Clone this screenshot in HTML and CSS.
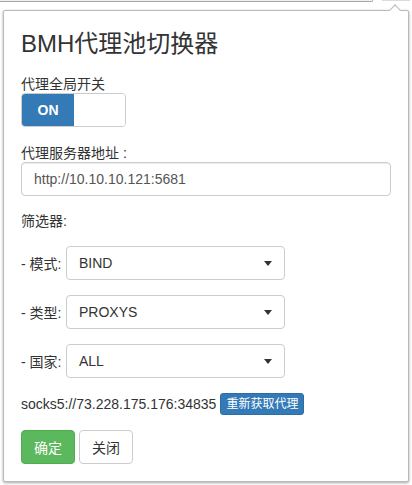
FILE: index.html
```html
<!DOCTYPE html>
<html lang="zh-CN">
<head>
<meta charset="utf-8">
<title>BMH代理池切换器</title>
<link rel="stylesheet" href="styles.css">
</head>
<body>
<div class="chrome">
  <div class="omnibox"></div>
  <div class="action"></div>
</div>
<div class="popup">
  <span class="arrow"></span>
  <h3 class="title">BMH代理池切换器</h3>
  <div class="label label-switch">代理全局开关</div>
  <div class="switch">
    <span class="switch-on">ON</span>
    <span class="switch-off"></span>
  </div>
  <div class="label label-server">代理服务器地址 :</div>
  <div class="input">http://10.10.10.121:5681</div>
  <div class="label label-filter">筛选器:</div>
  <div class="filter-row">
    <span class="filter-label">- 模式:</span>
    <div class="select"><span>BIND</span><span class="caret"></span></div>
  </div>
  <div class="filter-row">
    <span class="filter-label">- 类型:</span>
    <div class="select"><span>PROXYS</span><span class="caret"></span></div>
  </div>
  <div class="filter-row">
    <span class="filter-label">- 国家:</span>
    <div class="select"><span>ALL</span><span class="caret"></span></div>
  </div>
  <div class="proxy-row">
    <span class="proxy-text">socks5://73.228.175.176:34835</span>
    <span class="btn-xs">重新获取代理</span>
  </div>
  <div class="actions">
    <span class="btn btn-success">确定</span>
    <span class="btn btn-default">关闭</span>
  </div>
</div>
</body>
</html>
```
FILE: styles.css
```css
* { box-sizing: border-box; }
html, body {
  margin: 0;
  padding: 0;
  background: #fff;
}
body {
  font-family: "Liberation Sans", "Noto Sans CJK SC", sans-serif;
  font-size: 14px;
  color: #333;
  width: 412px;
  height: 485px;
  overflow: hidden;
}
.chrome {
  display: flex;
  height: 10px;
}
.omnibox {
  width: 373px;
  height: 2px;
  background: #f1f1f1;
  border-bottom: 1px solid #a6a6a6;
  border-right: 1px solid #a6a6a6;
  border-bottom-right-radius: 3px;
}
.action {
  margin-left: 9px;
  width: 28px;
  height: 1px;
  background: #dcdcdc;
}
.popup {
  position: relative;
  margin: 0 3px;
  height: 472px;
  border: 1px solid #b9b9b9;
  border-radius: 2px;
  box-shadow: 0 1px 3px rgba(0, 0, 0, 0.35);
  background: #fff;
  padding: 20px 17px 17px;
  display: flex;
  flex-direction: column;
  align-items: flex-start;
}
.arrow {
  position: absolute;
  left: 386.5px;
  top: -5.5px;
  width: 8px;
  height: 8px;
  background: #fff;
  border-top: 1px solid #b9b9b9;
  border-left: 1px solid #b9b9b9;
  transform: rotate(45deg);
}
.title {
  margin: 0;
  font-size: 24px;
  font-weight: 400;
  line-height: 26px;
  color: #333;
}
.label {
  line-height: 17px;
  color: #333;
}
.label-switch { margin-top: 19px; }
.label-server { margin-top: 18px; }
.label-filter { margin-top: 17px; }
.switch {
  display: flex;
  width: 105px;
  height: 34px;
  border: 1px solid #ccc;
  border-radius: 4px;
  overflow: hidden;
}
.switch-on {
  width: 52px;
  background: #337ab7;
  color: #fff;
  font-weight: 700;
  font-size: 14px;
  display: flex;
  align-items: center;
  justify-content: center;
}
.switch-off {
  flex: 1;
  background: #fff;
}
.input {
  width: 370px;
  height: 34px;
  border: 1px solid #ccc;
  border-radius: 4px;
  padding: 0 12px;
  display: flex;
  align-items: center;
  color: #555;
  box-shadow: inset 0 1px 1px rgba(0, 0, 0, 0.075);
}
.filter-row {
  display: flex;
  align-items: center;
  margin-top: 15px;
}
.filter-row:first-of-type { margin-top: 16px; }
.label-filter + .filter-row { margin-top: 16px; }
.filter-label {
  width: 45px;
  color: #333;
}
.select {
  width: 219px;
  height: 34px;
  border: 1px solid #ccc;
  border-radius: 4px;
  padding: 0 12px;
  display: flex;
  align-items: center;
  justify-content: space-between;
  color: #333;
}
.caret {
  width: 0;
  height: 0;
  border-top: 5px solid #333;
  border-left: 4px solid transparent;
  border-right: 4px solid transparent;
}
.proxy-row {
  display: flex;
  align-items: center;
  margin-top: 15px;
  height: 22px;
}
.proxy-text {
  margin-right: 4px;
}
.btn-xs {
  height: 22px;
  padding: 0 5px;
  font-size: 12px;
  line-height: 20px;
  color: #fff;
  background: #337ab7;
  border: 1px solid #2e6da4;
  border-radius: 3px;
  display: inline-flex;
  align-items: center;
}
.actions {
  display: flex;
  gap: 4px;
  margin-top: 15px;
}
.btn {
  height: 34px;
  padding: 0 12px;
  border: 1px solid #ccc;
  border-radius: 4px;
  display: inline-flex;
  align-items: center;
  font-size: 14px;
}
.btn-success {
  background: #5cb85c;
  border-color: #4cae4c;
  color: #fff;
}
.btn-default {
  background: #fff;
  color: #333;
}
```
